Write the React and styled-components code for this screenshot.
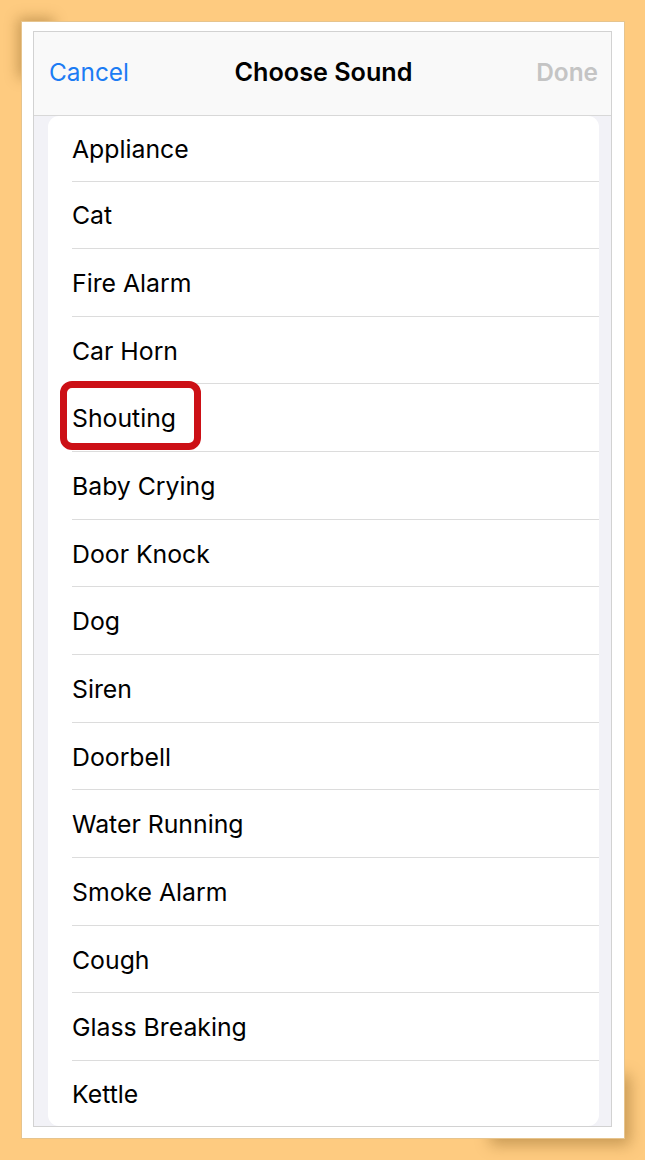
import styled, { createGlobalStyle } from "styled-components";

const sounds = [
    "Appliance",
    "Cat",
    "Fire Alarm",
    "Car Horn",
    "Shouting",
    "Baby Crying",
    "Door Knock",
    "Dog",
    "Siren",
    "Doorbell",
    "Water Running",
    "Smoke Alarm",
    "Cough",
    "Glass Breaking",
    "Kettle",
];

function App() {
    return (
        <>
            <GlobalStyle />
            <Frame>
                <Screen>
                    <Header>
                        <Cancel>Cancel</Cancel>
                        <Title>Choose Sound</Title>
                        <Done>Done</Done>
                    </Header>
                    <ListArea>
                        <Card>
                            {sounds.map((name) => (
                                <Row key={name}>
                                    {name === "Shouting" && <Highlight />}
                                    <Label>{name}</Label>
                                </Row>
                            ))}
                        </Card>
                    </ListArea>
                </Screen>
            </Frame>
        </>
    );
}

const GlobalStyle = createGlobalStyle`
    html {
        background: #FECB80;
    }

    body {
        margin: 0;
        padding: 0;
        font-family: Inter, "Noto Sans", sans-serif;
        width: 645px;
        height: 1160px;
        overflow: hidden;
    }
`

const Frame = styled.div`
    box-sizing: border-box;
    position: relative;
    width: 604px;
    height: 1118px;
    margin: 21px 0 0 21px;
    padding: 9px 12px 11px 11px;
    background: #FFFFFF;
    border: 1px solid #E6C48E;

    &::before {
        content: "";
        position: absolute;
        top: 4px;
        left: 4px;
        width: 36px;
        height: 60px;
        box-shadow: -8px -8px 14px rgba(120, 80, 20, 0.4);
        z-index: -1;
    }

    &::after {
        content: "";
        position: absolute;
        right: 4px;
        bottom: 4px;
        width: 140px;
        height: 70px;
        box-shadow: 10px 11px 14px rgba(120, 80, 20, 0.4);
        z-index: -1;
    }
`

const Screen = styled.div`
    box-sizing: border-box;
    display: flex;
    flex-direction: column;
    height: 100%;
    border: 1px solid #D2D2D2;
    overflow: hidden;
`

const Header = styled.div`
    box-sizing: border-box;
    display: grid;
    grid-template-columns: 1fr auto 1fr;
    align-items: center;
    height: 84px;
    padding: 0 13px 4px 15px;
    background: #F9F9F9;
    border-bottom: 1px solid #D8D8D8;
    font-size: 24.4px;
`

const Cancel = styled.span`
    color: #1C7CF4;
    justify-self: start;
`

const Title = styled.span`
    font-size: 25.2px;
    font-weight: 600;
    color: #000000;
`

const Done = styled.span`
    justify-self: end;
    font-weight: 600;
    color: #C4C4C4;
`

const ListArea = styled.div`
    box-sizing: border-box;
    flex: 1;
    display: flex;
    padding: 0 12px 0 14px;
    background: #F2F2F7;
`

const Card = styled.div`
    flex: 1;
    display: flex;
    flex-direction: column;
    background: #FFFFFF;
    border-radius: 11px;
`

const Row = styled.div`
    box-sizing: border-box;
    position: relative;
    display: flex;
    align-items: center;
    flex: none;
    height: 67.67px;
    margin-left: 24px;
    border-bottom: 1px solid #DCDCDC;
    font-size: 24.8px;
    color: #000000;

    &:first-child {
        height: 65.5px;
    }

    &:last-child {
        border-bottom: none;
        flex: 1;
    }
`

const Label = styled.span`
    margin: 1px 0 0 0;
`

const Highlight = styled.span`
    box-sizing: border-box;
    position: absolute;
    left: -12px;
    top: -3px;
    width: 141px;
    height: 69px;
    border: 7px solid #CC1016;
    border-radius: 12px;
`

export default App;
